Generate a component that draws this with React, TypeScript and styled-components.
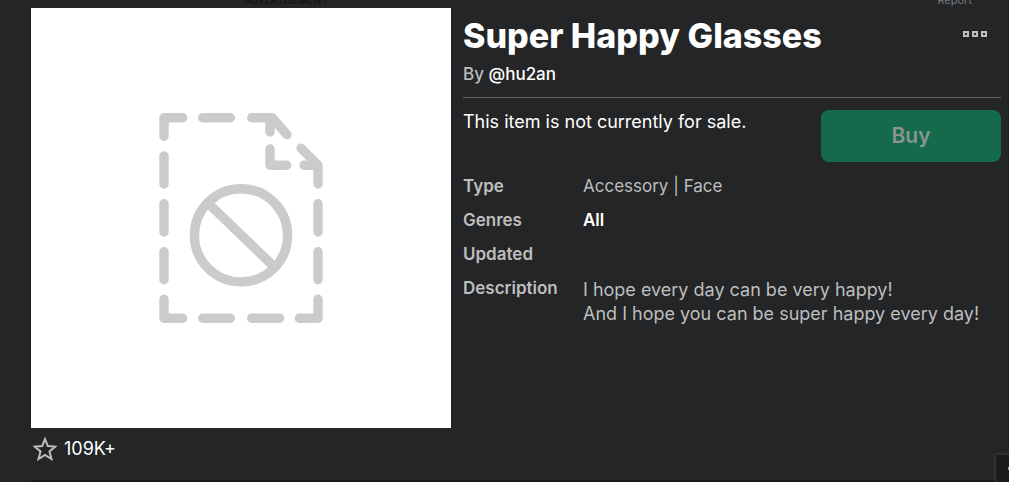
import React from "react";
import styled, { createGlobalStyle } from "styled-components";

const GlobalStyle = createGlobalStyle`
  * { box-sizing: border-box; }
  body {
    margin: 0;
    background: #232527;
    color: #bdbebe;
    font-family: Inter, "Liberation Sans", sans-serif;
    font-size: 17px;
    line-height: 24px;
  }
  h1, p, dl, dt, dd { margin: 0; }
`;

const Page = styled.main`
  min-height: 100vh;
  padding: 0 8px 0 31px;
`;

const AdStrip = styled.div`
  height: 8px;
  overflow: hidden;
  display: flex;
  align-items: flex-end;
  justify-content: space-between;
  padding: 0 29px 0 213px;
  font-size: 11px;
  line-height: 16px;
`;

const AdLabel = styled.span`
  color: #111214;
  font-size: 10px;
`;

const ReportLink = styled.a`
  color: #77797b;
  text-decoration: none;
`;

const Item = styled.section`
  display: grid;
  grid-template-columns: 420px minmax(0, 1fr);
  column-gap: 12px;
  padding-bottom: 10px;
`;

const Thumbnail = styled.div`
  background: #fff;
  aspect-ratio: 1;

  svg { display: block; width: 100%; }
`;

const Favorite = styled.button`
  display: flex;
  align-items: center;
  gap: 7px;
  height: 42px;
  padding: 0 2px;
  border: 0;
  background: none;
  color: #fff;
  font: inherit;
  font-size: 18px;
`;

const TitleRow = styled.div`
  display: flex;
  align-items: center;
  justify-content: space-between;
  height: 56px;
`;

const Title = styled.h1`
  color: #fff;
  font-size: 34px;
  font-weight: 800;
  line-height: 48px;
`;

const MoreButton = styled.button`
  display: flex;
  gap: 3px;
  padding: 9px 14px 13px;
  border: 0;
  background: none;
`;

const Dot = styled.span`
  width: 6px;
  height: 6px;
  border: 2px solid #bdbebe;
`;

const Creator = styled.p`
  padding-bottom: 13px;
  border-bottom: 1px solid #656668;
  font-weight: 500;
  line-height: 20px;
`;

const CreatorLink = styled.a`
  color: #fff;
  text-decoration: none;
`;

const Purchase = styled.div`
  display: flex;
  justify-content: space-between;
  padding: 12px 0 7px;
`;

const SaleStatus = styled.p`
  color: #fff;
  font-size: 18px;
`;

const BuyButton = styled.button`
  flex: none;
  width: 180px;
  height: 52px;
  border: 0;
  border-radius: 8px;
  background: #146a4b;
  color: #89958f;
  font: inherit;
  font-size: 21px;
  font-weight: 600;
`;

const Details = styled.dl`
  display: grid;
  grid-template-columns: 120px minmax(0, 1fr);
`;

const Label = styled.dt`
  padding: 5px 0;
  font-weight: 600;
`;

const Value = styled.dd<{ $strong?: boolean }>`
  padding: 5px 0;
  color: ${(p) => (p.$strong ? "#fff" : "inherit")};
  font-weight: ${(p) => (p.$strong ? 600 : 400)};
`;

const Description = styled(Value)`
  padding-top: 7px;
  font-size: 18px;
`;

const ChatPanel = styled.aside`
  position: fixed;
  right: 0;
  bottom: 0;
  width: 13px;
  height: 27px;
  display: flex;
  align-items: center;
  justify-content: flex-end;
  background: #191b1d;
  box-shadow: 0 0 3px 1px #3a3c3e;
`;

const ChatMark = styled.span`
  width: 1px;
  height: 3px;
  background: #a0a1a2;
`;

const Footer = styled.div`
  height: 2px;
  margin-right: -8px;
  background: #191a1c;
`;

const UnavailableIcon = () => (
  <svg viewBox="0 0 420 420" role="img" aria-label="Thumbnail unavailable">
    <g fill="none" stroke="#cbcbcb" strokeWidth="9.4" strokeLinecap="round" strokeLinejoin="round">
      <path d="M133 128.3V109.7H151.7M171.7 109.7H199.3M220.7 109.7H239V124M239 109.7H241L256 126.7" />
      <path d="M239 141V157.3H255.7M270 140.3L287 157.3V176M273 157.3H287" />
      <path d="M133 148V176M133 195.7V224M133 243.7V271.7M287 195.7V224M287 243.7V271.7" />
      <path d="M133 291.3V310.3H151.7M171.7 310.3H199.3M220.7 310.3H248.7M268.3 310.3H287V291.3" />
      <circle cx="210" cy="227.3" r="46.6" />
      <path d="M177.3 195.3L242.3 258" />
    </g>
  </svg>
);

const StarIcon = () => (
  <svg width="24" height="24" viewBox="0 0 24 24" fill="none" stroke="#bdbebe" strokeWidth="2" aria-hidden="true">
    <path d="M12 2L14.8 9.1L22.4 9.6L16.5 14.4L18.5 22L12 17.9L5.5 22L7.5 14.4L1.6 9.6L9.2 9.1Z" />
  </svg>
);

export default function App() {
  return (
    <>
      <GlobalStyle />
      <Page>
        <AdStrip>
          <AdLabel>ADVERTISEMENT</AdLabel>
          <ReportLink href="#report">Report</ReportLink>
        </AdStrip>
        <Item>
          <div>
            <Thumbnail>
              <UnavailableIcon />
            </Thumbnail>
            <Favorite type="button" aria-label="Favorite, 109K+">
              <StarIcon />
              109K+
            </Favorite>
          </div>
          <div>
            <TitleRow>
              <Title>Super Happy Glasses</Title>
              <MoreButton type="button" aria-label="More options">
                <Dot />
                <Dot />
                <Dot />
              </MoreButton>
            </TitleRow>
            <Creator>
              By <CreatorLink href="#hu2an">@hu2an</CreatorLink>
            </Creator>
            <Purchase>
              <SaleStatus>This item is not currently for sale.</SaleStatus>
              <BuyButton type="button" disabled>Buy</BuyButton>
            </Purchase>
            <Details>
              <Label>Type</Label>
              <Value>Accessory | Face</Value>
              <Label>Genres</Label>
              <Value $strong>All</Value>
              <Label>Updated</Label>
              <Value />
              <Label>Description</Label>
              <Description>
                I hope every day can be very happy!
                <br />
                And I hope you can be super happy every day!
              </Description>
            </Details>
          </div>
        </Item>
        <Footer />
      </Page>
      <ChatPanel aria-label="Chat">
        <ChatMark />
      </ChatPanel>
    </>
  );
}
